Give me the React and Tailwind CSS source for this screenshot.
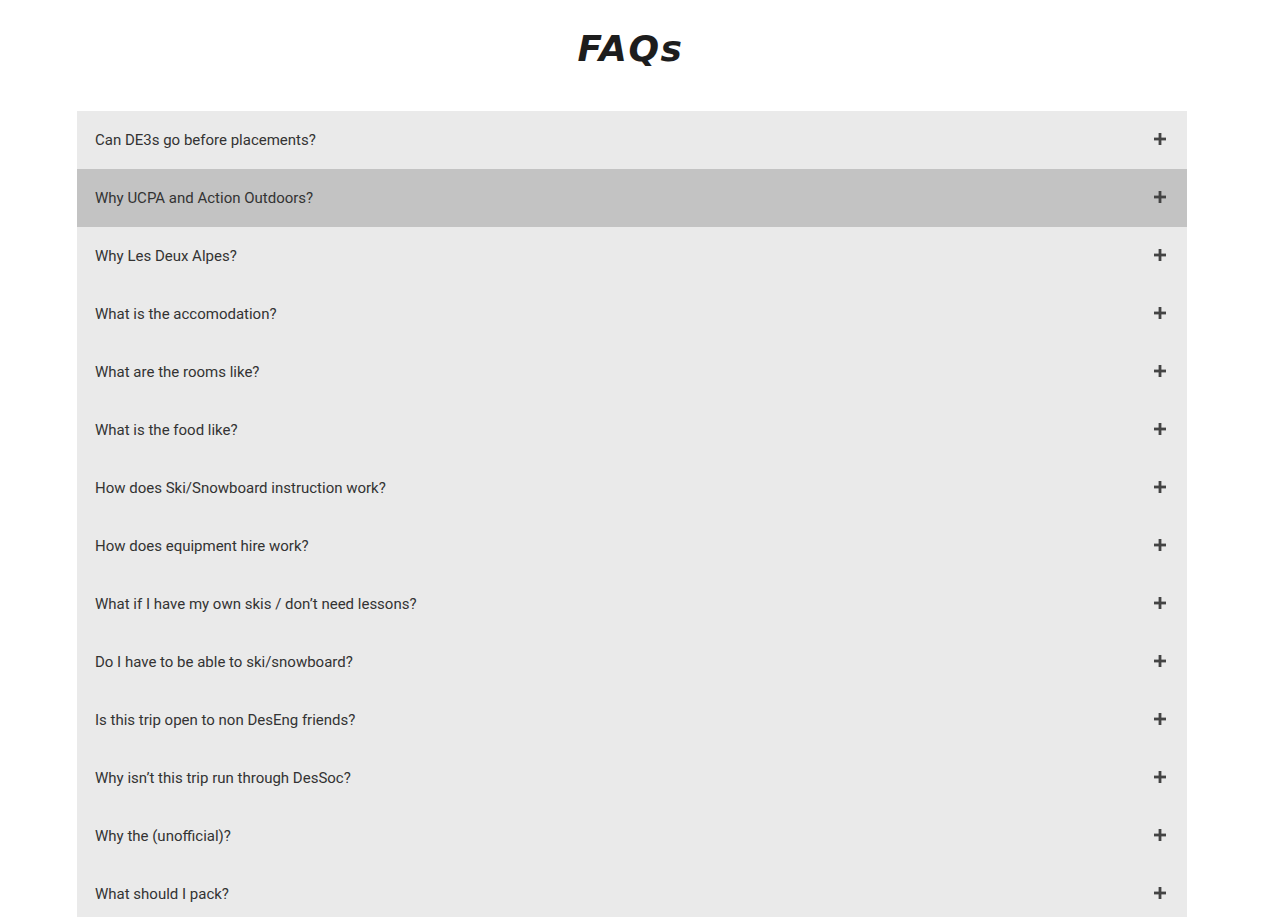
import React, { useState } from 'react';

const faqs = [
  'Can DE3s go before placements?',
  'Why UCPA and Action Outdoors?',
  'Why Les Deux Alpes?',
  'What is the accomodation?',
  'What are the rooms like?',
  'What is the food like?',
  'How does Ski/Snowboard instruction work?',
  'How does equipment hire work?',
  'What if I have my own skis / don’t need lessons?',
  'Do I have to be able to ski/snowboard?',
  'Is this trip open to non DesEng friends?',
  'Why isn’t this trip run through DesSoc?',
  'Why the (unofficial)?',
  'What should I pack?',
];

const Plus = () => (
  <svg width="12" height="12" viewBox="0 0 12 12" className="shrink-0 -mt-[2px]">
    <rect x="4.6" y="0" width="2.8" height="12" fill="#444" />
    <rect x="0" y="4.6" width="12" height="2.8" fill="#444" />
  </svg>
);

export default function App() {
  const [hovered] = useState(1);

  return (
    <div className="min-h-screen bg-white font-['Roboto',sans-serif]">
      <h1 className="pt-[27px] pb-[40px] text-center text-[36px] leading-[44px] font-bold italic tracking-[1.5px] text-[#1d1d1d] font-['DejaVu_Sans',sans-serif]">
        FAQs
      </h1>
      <div className="ml-[77px] w-[1110px]">
        {faqs.map((q, i) => (
          <div
            key={q}
            className={`flex h-[58px] items-center justify-between pl-[18px] pr-[21px] ${
              i === hovered ? 'bg-[#c3c3c3]' : 'bg-[#eaeaea]'
            }`}
          >
            <span className="text-[15px] text-[#333]">{q}</span>
            <Plus />
          </div>
        ))}
      </div>
    </div>
  );
}
